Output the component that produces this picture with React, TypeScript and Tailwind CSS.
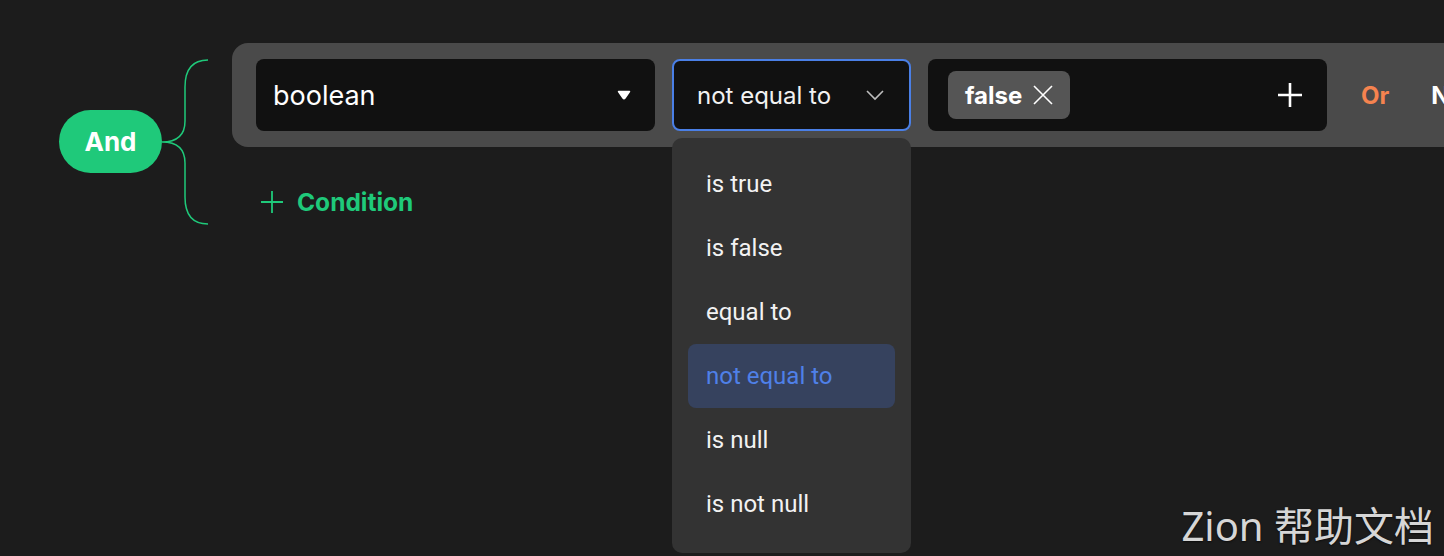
import React from "react";

const items = ["is true", "is false", "equal to", "not equal to", "is null", "is not null"];

export default function App() {
  return (
    <div
      className="relative h-[556px] w-[1444px] overflow-hidden bg-[#1c1c1c]"
      style={{ fontFamily: "Inter, 'Noto Sans', sans-serif" }}
    >
      <div className="flex items-start pl-[59px] pt-[43px]">
        {/* And pill */}
        <div className="mt-[67px] flex h-[63px] w-[103px] shrink-0 items-center justify-center rounded-full bg-[#1fc97a] text-[26px] font-bold text-white">
          And
        </div>
        {/* bracket */}
        <svg className="mt-[16px] shrink-0" width="48" height="167" viewBox="0 0 48 167" fill="none">
          <path
            d="M46 1 C31 1 23 10 23 28 L23 62 C23 76 15 83 0 83 C15 83 23 90 23 104 L23 138 C23 156 31 165 46 165"
            stroke="#1fc97a"
            strokeWidth="1.5"
          />
        </svg>
        <div className="ml-[22px] flex shrink-0 flex-col">
          {/* panel */}
          <div className="flex h-[104px] w-[1300px] items-center rounded-l-[16px] bg-[#4a4a4a] pl-[24px]">
            <div className="flex h-[72px] w-[399px] shrink-0 items-center justify-between rounded-[8px] bg-[#111111] pl-[17px] pr-[24px]">
              <span className="pt-[2px] text-[27px] text-white">boolean</span>
              <svg width="14" height="10" viewBox="0 0 14 10">
                <path d="M1.5 1.5 H12.5 L8 8 Q7 9.3 6 8 Z" fill="white" stroke="white" strokeWidth="1.5" strokeLinejoin="round" />
              </svg>
            </div>
            <div className="relative ml-[17px] shrink-0">
              <div className="flex h-[72px] w-[239px] items-center justify-between rounded-[8px] border-2 border-[#4a7fe6] bg-[#111111] pl-[23px] pr-[24px]">
                <span className="pt-[2px] text-[24px] text-[#f2f2f2]">not equal to</span>
                <svg width="20" height="12" viewBox="0 0 20 12" fill="none">
                  <path d="M2 2 L10 10 L18 2" stroke="#bdbdbd" strokeWidth="1.6" />
                </svg>
              </div>
              {/* dropdown */}
              <div
                className="absolute left-0 top-[79px] z-10 flex h-[415px] w-[239px] flex-col rounded-[10px] bg-[#333333] px-[16px] pt-[14px]"
                style={{ fontFamily: "Roboto, 'Noto Sans', sans-serif" }}
              >
                {items.map((it) => (
                  <div
                    key={it}
                    className={
                      it === "not equal to"
                        ? "flex h-[64px] shrink-0 items-center rounded-[8px] bg-[#36425e] pl-[18px] text-[24px] text-[#4f80e8]"
                        : "flex h-[64px] shrink-0 items-center rounded-[8px] pl-[18px] text-[24px] text-[#f2f2f2]"
                    }
                  >
                    {it}
                  </div>
                ))}
              </div>
            </div>
            <div className="ml-[17px] flex h-[72px] w-[399px] shrink-0 items-center justify-between rounded-[8px] bg-[#111111] pl-[20px] pr-[24px]">
              <div className="flex h-[48px] items-center gap-[10px] rounded-[8px] bg-[#555555] pl-[17px] pr-[16px]">
                <span className="pt-[1px] text-[24px] font-bold text-white">false</span>
                <svg width="22" height="22" viewBox="0 0 22 22" fill="none">
                  <path d="M2 2 L20 20 M20 2 L2 20" stroke="white" strokeWidth="1.6" />
                </svg>
              </div>
              <svg width="26" height="26" viewBox="0 0 26 26" fill="none">
                <path d="M13 1 V25 M1 13 H25" stroke="white" strokeWidth="2.6" />
              </svg>
            </div>
            <span className="ml-[34px] shrink-0 pt-[1px] text-[24px] font-bold text-[#f5834f]">Or</span>
            <span className="ml-[42px] shrink-0 pt-[1px] text-[24px] font-bold text-white">Not</span>
          </div>
          {/* condition */}
          <div className="mt-[33px] flex h-[44px] items-center pl-[28px]">
            <svg width="24" height="24" viewBox="0 0 24 24" fill="none">
              <path d="M12 1 V23 M1 12 H23" stroke="#1fc97a" strokeWidth="1.8" />
            </svg>
            <span className="ml-[13px] text-[24.5px] font-bold text-[#1fc97a]">Condition</span>
          </div>
        </div>
      </div>
      <div
        className="absolute bottom-[4px] right-[10px] text-[40px] leading-[1.3] text-[#d6d6d6]"
        style={{ fontFamily: "'Noto Sans', 'Noto Sans CJK SC', sans-serif", textShadow: "0 1px 2px rgba(0,0,0,0.6)" }}
      >
        Zion 帮助文档
      </div>
    </div>
  );
}
